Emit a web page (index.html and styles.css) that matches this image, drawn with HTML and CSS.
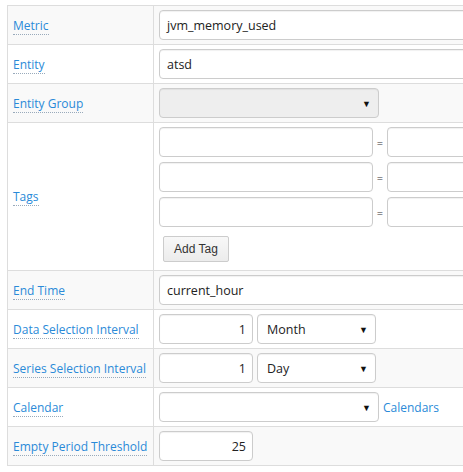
FILE: index.html
```html
<!DOCTYPE html>
<html>
<head>
<meta charset="utf-8">
<link rel="stylesheet" href="styles.css">
</head>
<body>
<table class="form">
  <tr class="odd">
    <td class="lbl"><span class="hint">Metric</span></td>
    <td class="val"><div class="field wide">jvm_memory_used</div></td>
  </tr>
  <tr>
    <td class="lbl"><span class="hint">Entity</span></td>
    <td class="val"><div class="field wide">atsd</div></td>
  </tr>
  <tr class="odd">
    <td class="lbl"><span class="hint">Entity Group</span></td>
    <td class="val"><div class="select disabled sel-wide"><span class="arrow">▼</span></div></td>
  </tr>
  <tr>
    <td class="lbl"><span class="hint">Tags</span></td>
    <td class="val">
      <div class="tags">
        <div class="tag-row"><div class="field tag-key"></div><span class="eq">=</span><div class="field tag-val"></div></div>
        <div class="tag-row"><div class="field tag-key"></div><span class="eq">=</span><div class="field tag-val"></div></div>
        <div class="tag-row"><div class="field tag-key"></div><span class="eq">=</span><div class="field tag-val"></div></div>
      </div>
      <button class="btn">Add Tag</button>
    </td>
  </tr>
  <tr class="odd">
    <td class="lbl"><span class="hint">End Time</span></td>
    <td class="val"><div class="field wide">current_hour</div></td>
  </tr>
  <tr>
    <td class="lbl"><span class="hint">Data Selection Interval</span></td>
    <td class="val"><div class="inline"><div class="field num">1</div><div class="select sel-unit">Month<span class="arrow">▼</span></div></div></td>
  </tr>
  <tr class="odd">
    <td class="lbl"><span class="hint">Series Selection Interval</span></td>
    <td class="val"><div class="inline"><div class="field num">1</div><div class="select sel-unit">Day<span class="arrow">▼</span></div></div></td>
  </tr>
  <tr>
    <td class="lbl"><span class="hint">Calendar</span></td>
    <td class="val"><div class="inline"><div class="select sel-wide"><span class="arrow">▼</span></div><a class="link">Calendars</a></div></td>
  </tr>
  <tr class="odd">
    <td class="lbl"><span class="hint">Empty Period Threshold</span></td>
    <td class="val"><div class="field num">25</div></td>
  </tr>
</table>
</body>
</html>
```
FILE: styles.css
```css
html { overflow: hidden; }
body {
  margin: 5px 0 0 7px;
  font-family: "Open Sans", sans-serif;
  font-size: 12px;
  color: #333;
  background: #fff;
}
.form {
  border-collapse: collapse;
  width: 600px;
}
.form td {
  border: 1px solid #ddd;
  padding: 4px 5px;
  vertical-align: middle;
}
.form tr.odd td { background: #f9f9f9; }
.lbl { width: 135px; white-space: nowrap; }
.hint {
  color: #2a8ad8;
  border-bottom: 1px dotted #9ab;
}
.field, .select {
  box-sizing: border-box;
  height: 30px;
  border: 1px solid #ccc;
  border-radius: 4px;
  background: #fff;
  box-shadow: inset 0 1px 1px rgba(0,0,0,0.06);
  font-size: 12.5px;
  color: #222;
  display: flex;
  align-items: center;
  padding: 0 7px;
}
.wide { width: 440px; }
.select { position: relative; padding: 0 9px; }
.select.disabled { background: #eee; }
.sel-wide { width: 220px; }
.sel-unit { width: 119px; }
.arrow {
  position: absolute;
  right: 7px;
  top: 8px;
  font-size: 9px;
  color: #111;
}
.num { width: 94px; justify-content: flex-end; padding-right: 6px; }
.inline { display: flex; align-items: center; gap: 4px; }
.tags { display: flex; flex-direction: column; gap: 5px; }
.tag-row { display: flex; align-items: center; }
.tag-key { width: 214px; }
.tag-val { width: 120px; }
.eq { width: 14px; text-align: center; font-size: 11px; }
.btn {
  margin: 9px 0 4px 4px;
  height: 26px;
  padding: 0 10px;
  border: 1px solid #ccc;
  border-radius: 2px;
  background: linear-gradient(#f8f8f8, #ececec);
  font-family: "Liberation Sans", Arial, sans-serif;
  font-size: 12px;
  color: #333;
}
.link { color: #2a8ad8; font-size: 12px; }
```
